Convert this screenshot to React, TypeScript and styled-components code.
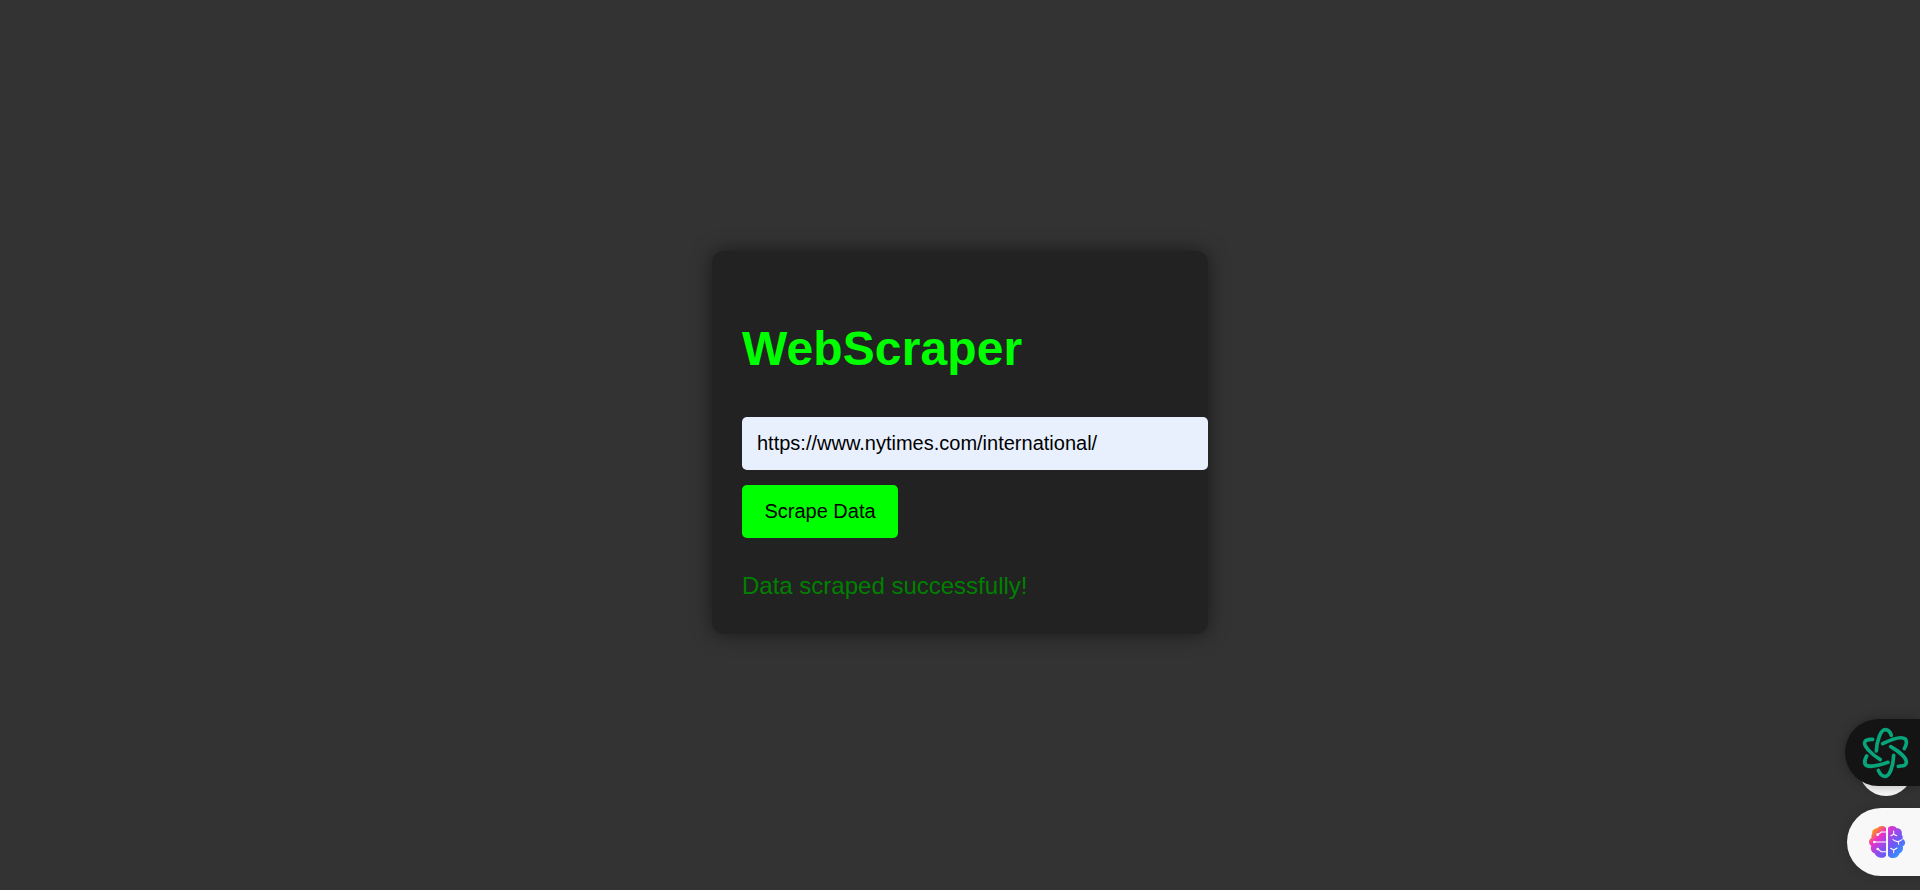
import React, { useState } from "react";
import styled, { createGlobalStyle } from "styled-components";

const GlobalStyle = createGlobalStyle`
  body {
    margin: 0;
    background: #333;
    font-family: "Liberation Sans", Arial, sans-serif;
    overflow: hidden;
  }
`;

const Page = styled.main`
  display: flex;
  align-items: center;
  justify-content: center;
  box-sizing: border-box;
  height: 100vh;
  padding-bottom: 5px;
`;

const Card = styled.section`
  box-sizing: border-box;
  width: 496px;
  height: 383px;
  padding: 70px 30px 30px;
  border-radius: 12px;
  background: #222;
  box-shadow: 0 0 20px rgba(0, 0, 0, 0.5);
`;

const Title = styled.h1`
  margin: 0 0 41px;
  font-size: 48px;
  line-height: 55px;
  letter-spacing: 0.1px;
  color: #0f0;
`;

const UrlInput = styled.input`
  display: block;
  box-sizing: border-box;
  width: 466px;
  height: 53px;
  margin: 0 0 15px;
  padding: 15px;
  border: 0;
  border-radius: 5px;
  outline: 0;
  background: #e8f0fe;
  color: #000;
  font: 20px "Liberation Sans", Arial, sans-serif;
`;

const ScrapeButton = styled.button`
  display: block;
  width: 156px;
  height: 53px;
  padding: 0;
  border: 0;
  border-radius: 5px;
  background: #0f0;
  color: #000;
  font: 20px "Liberation Sans", Arial, sans-serif;
`;

const Message = styled.p`
  margin: 34px 0 0;
  font-size: 24px;
  line-height: 28px;
  color: green;
`;

const Dock = styled.aside`
  position: fixed;
  right: 0;
  bottom: 14px;
  display: flex;
  flex-direction: column;
  align-items: flex-end;
  gap: 22px;
`;

const Tab = styled.div<{ $dark?: boolean }>`
  position: relative;
  display: flex;
  align-items: center;
  box-sizing: border-box;
  width: ${(p) => (p.$dark ? 75 : 73)}px;
  height: ${(p) => (p.$dark ? 67 : 68)}px;
  padding: ${(p) => (p.$dark ? "0 0 2px 10px" : "1px 0 0 13px")};
  border-radius: 34px 0 0 34px;
  background: ${(p) => (p.$dark ? "#141414" : "#f8f8f8")};
  box-shadow: 0 0 12px rgba(0, 0, 0, ${(p) => (p.$dark ? 0.3 : 0.15)});
  svg {
    flex: none;
  }
`;

const Bubble = styled.div`
  position: absolute;
  right: 7px;
  bottom: 80px;
  width: 54px;
  height: 54px;
  border-radius: 50%;
  background: #f8f8f8;
`;

const AtomIcon = () => (
  <svg width="60" height="64" viewBox="75 60 180 192" fill="none" stroke="#08a47b" strokeWidth="11" strokeLinecap="round">
    <path d="M139 153C141 120 152 89 166 89C174 89 180 95 184 106" />
    <path d="M158 131C190 115 216 109 226 117C232 124 229 135 223 146" />
    <path d="M182 140C210 156 230 175 229 188C227 199 218 197 205 199" />
    <path d="M191 166C190 200 178 230 165 229C155 228 149 221 145 211" />
    <path d="M174 187C140 199 110 203 105 192C103 185 105 176 110 168" />
    <path d="M151 179C120 160 101 137 104 127C106 119 115 119 128 118" />
  </svg>
);

const BrainIcon = () => (
  <svg width="56" height="56" viewBox="0 0 168 168" fill="none">
    <defs>
      <linearGradient id="brain" x1="40" y1="38" x2="126" y2="124" gradientUnits="userSpaceOnUse">
        <stop offset="0" stopColor="#ffa000" />
        <stop offset=".1" stopColor="#fb7b3c" />
        <stop offset=".26" stopColor="#ee2fc8" />
        <stop offset=".46" stopColor="#9e49e8" />
        <stop offset=".68" stopColor="#655cf8" />
        <stop offset="1" stopColor="#25a5ff" />
      </linearGradient>
    </defs>
    <g fill="url(#brain)">
      <path d="M78 39C72 31 58 31 52 40C42 40 35 47 37 56C33 60 34 65 35 68C25 73 24 86 34 92C30 103 35 112 44 115C47 128 70 134 78 122Z" />
      <path d="M84 39C90 31 105 31 110 40C121 40 128 48 125 59C129 63 129 67 127 71C138 76 138 89 128 94C131 104 126 113 118 116C115 129 92 135 84 122Z" />
    </g>
    <g stroke="#fff" strokeWidth="3.2" strokeLinecap="round" strokeLinejoin="round">
      <path d="M78 51H64L54 59M78 81H43M78 110H63L54 102" />
      <path d="M101 48V58L93 62M101 58L110 62M99 74C106 80 117 82 126 74M115 80L116 88M92 100L101 105L111 99M101 105V113" />
    </g>
    <g fill="#fff">
      <circle cx="53" cy="59" r="4" />
      <circle cx="43" cy="81" r="4" />
      <circle cx="53" cy="102" r="4" />
    </g>
  </svg>
);

export default function App() {
  const [url, setUrl] = useState("https://www.nytimes.com/international/");
  return (
    <>
      <GlobalStyle />
      <Page>
        <Card>
          <Title>WebScraper</Title>
          <UrlInput aria-label="URL" value={url} onChange={(e) => setUrl(e.target.value)} />
          <ScrapeButton>Scrape Data</ScrapeButton>
          <Message>Data scraped successfully!</Message>
        </Card>
      </Page>
      <Dock>
        <Bubble />
        <Tab $dark>
          <AtomIcon />
        </Tab>
        <Tab>
          <BrainIcon />
        </Tab>
      </Dock>
    </>
  );
}
